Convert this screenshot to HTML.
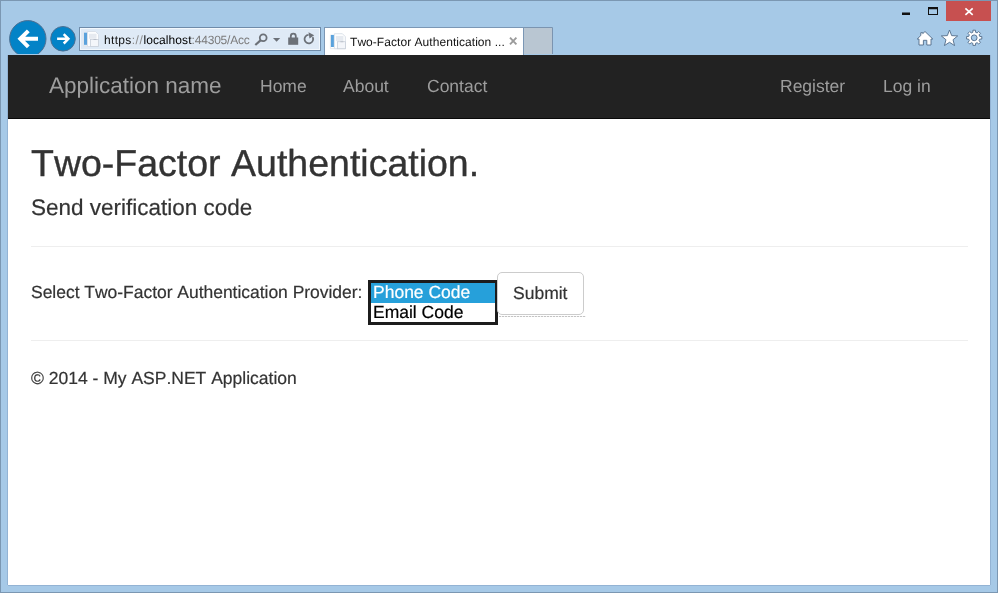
<!DOCTYPE html>
<html><head><meta charset="utf-8"><title>Two-Factor Authentication</title>
<style>
*{box-sizing:border-box;margin:0;padding:0}
html,body{font-kerning:none;text-rendering:geometricPrecision;width:998px;height:593px;overflow:hidden;background:#a6c9e7;font-family:"Liberation Sans",Arial,sans-serif}
#win{position:absolute;left:0;top:0;width:998px;height:593px;background:#a6c9e7;box-shadow:inset 0 0 0 1px #7b97b2;}
.abs{position:absolute}
#page{box-shadow:-1px 0 0 #93b3d4,1px 0 0 #93b3d4,0 1px 0 #93b3d4;position:absolute;left:8px;top:55px;width:982px;height:530px;background:#fff;overflow:hidden}
#nav{position:absolute;left:0;top:0;width:982px;height:64px;background:#222;border-bottom:1px solid #090909}
#nav span{will-change:transform;position:absolute;color:#9d9d9d;white-space:nowrap;line-height:1}
.brand{font-size:22.5px;left:41px;top:20px}
.lnk{font-size:17.5px;top:23px}
.txt{will-change:transform;-webkit-text-stroke:0.2px;position:absolute;white-space:nowrap;line-height:1;color:#333}
.hr{position:absolute;left:23px;width:937px;height:1px;background:#eee}
.chrome{letter-spacing:0.05px;will-change:transform;font-family:"Liberation Sans",sans-serif;font-size:12px;white-space:nowrap;line-height:1;position:absolute}
</style></head><body>
<div id="win">
<!-- chrome -->
<svg class="abs" style="left:0;top:0" width="998" height="56" viewBox="0 0 998 56">
<!-- window controls -->
<rect x="902" y="12.5" width="8" height="2.5" fill="#111"/>
<path d="M928 7 H938 V15 H928 Z M929 9.300 V14 H937 V9.300 Z" fill="#111" fill-rule="evenodd"/>
<rect x="946" y="1" width="45" height="20" fill="#c75050"/>
<path d="M965.400 8.300 L972.700 14.800 M972.700 8.300 L965.400 14.800" stroke="#fff" stroke-width="1.700" fill="none"/>
<!-- back / forward -->
<clipPath id="cb"><rect x="0" y="0" width="100" height="54"/></clipPath>
<g clip-path="url(#cb)">
<circle cx="27.800" cy="38.800" r="18.200" fill="#0383c7" stroke="#4c6f92" stroke-width="1"/>
<path d="M20.300 38.800 H38 M28.300 30.800 L20.300 38.800 L28.300 46.800" stroke="#fff" stroke-width="4" fill="none" stroke-linejoin="miter"/>
</g>
<circle cx="63" cy="38.800" r="12.300" fill="#0383c7" stroke="#4c6f92" stroke-width="1"/>
<path d="M57.100 38.800 H68.400 M63.700 34.100 L68.400 38.800 L63.700 43.500" stroke="#fff" stroke-width="2.500" fill="none"/>
<!-- address bar -->
<rect x="79.500" y="27.500" width="241" height="23" fill="#dfeaf6" stroke="#6f8ba9"/>
<rect x="80.500" y="28.500" width="239" height="21" fill="none" stroke="#f3f8fd"/>
<g id="pgicon">
<path d="M83.500 32.500 V46.500 H98" fill="none" stroke="#dfe4ea" stroke-width="0.800"/>
<path d="M87.500 31.500 H95.500 L98.500 34.500 V46.500 H87.500 Z" fill="#fcfdfe" stroke="#d3dbe5" stroke-width="0.800"/>
<rect x="84" y="32.700" width="3" height="12.100" fill="#5aa2dc"/>
<rect x="89" y="33.800" width="7.500" height="5" fill="#e6eaf0"/>
<rect x="90.500" y="39.500" width="8" height="7" fill="#f4f6fa" stroke="#c9d0da" stroke-width="0.800"/>
<rect x="93.500" y="39.200" width="3" height="0.800" fill="#b3b9c2"/>
</g>
<g fill="none" stroke="#6c7178">
<circle cx="263.200" cy="37.700" r="3.400" stroke-width="1.800"/><path d="M260.800 40.200 L255.300 45" stroke-width="2.200"/>
<path d="M312.700 37.200 A4.300 4.300 0 1 1 308.600 34.800" stroke-width="1.800"/>
<path d="M290.800 38 V36.200 a2.500 2.500 0 0 1 5 0 V38" stroke-width="1.800"/>
</g>
<g fill="#6c7178">
<path d="M273 38 H280.200 L276.600 41.700 Z"/>
<rect x="288.200" y="37.500" width="10" height="7.300"/>
<path d="M308.500 32.300 L314.200 35.200 L309.500 38.400 Z"/>
</g>
<!-- tab -->
<rect x="324.500" y="27.500" width="199" height="30" fill="#fff" stroke="#7b97b5"/>
<use href="#pgicon" x="246.900" y="2.200"/>
<path d="M510 37.700 L516.400 44.300 M516.400 37.700 L510 44.300" stroke="#9b9b9b" stroke-width="1.900" fill="none"/>
<rect x="524" y="28" width="28" height="26" fill="#b9c6d2"/><path d="M524 27.500 H552.500 V54" fill="none" stroke="#7b94b0"/>
<!-- right icons -->
<g fill="#fff" stroke="#506b88" stroke-width="0.900" stroke-linejoin="round">
<path d="M925 31.500 L932.800 39 H931 V45 H926.800 V40.300 H923.400 V45 H919 V39 H917.200 L920.800 35.500 V32.700 H922.800 V33.600 Z"/>
<path d="M949.50 30.00 L951.67 35.61 L957.68 35.94 L953.02 39.74 L954.55 45.56 L949.50 42.30 L944.45 45.56 L945.98 39.74 L941.32 35.94 L947.33 35.61 Z"/>
<path fill-rule="evenodd" d="M972.83 32.27 L972.94 30.20 L975.46 30.20 L975.57 32.27 L977.14 32.92 L978.68 31.54 L980.46 33.32 L979.08 34.86 L979.73 36.43 L981.80 36.54 L981.80 39.06 L979.73 39.17 L979.08 40.74 L980.46 42.28 L978.68 44.06 L977.14 42.68 L975.57 43.33 L975.46 45.40 L972.94 45.40 L972.83 43.33 L971.26 42.68 L969.72 44.06 L967.94 42.28 L969.32 40.74 L968.67 39.17 L966.60 39.06 L966.60 36.54 L968.67 36.43 L969.32 34.86 L967.94 33.32 L969.72 31.54 L971.26 32.92 Z M971.30 37.80 a2.9 2.9 0 1 0 5.8 0 a2.9 2.9 0 1 0 -5.8 0 Z"/>
</g>
</svg>
<div class="chrome" id="addr" style="left:104px;top:34px;letter-spacing:0"><span id="a1" style="color:#111;letter-spacing:.33px">https</span><span id="a2" style="color:#8a8a8a;letter-spacing:.6px">://</span><span id="a3" style="color:#000;letter-spacing:.08px">localhost</span><span id="a4" style="color:#7b7b7b;letter-spacing:-.2px">:44305/Acc</span></div>
<div class="chrome" id="tabtitle" style="left:350px;top:36px;color:#111">Two-Factor Authentication ...</div>
<!-- page -->
<div id="page">
<div id="nav">
<span class="brand">Application name</span>
<span class="lnk" style="left:252px">Home</span>
<span class="lnk" style="left:335px">About</span>
<span class="lnk" style="left:419px">Contact</span>
<span class="lnk" style="left:772px">Register</span>
<span class="lnk" style="left:875px">Log in</span>
</div>
<div class="txt" id="h2" style="left:23px;top:90px;font-size:37.5px;-webkit-text-stroke:0.35px #333">Two-Factor Authentication.</div>
<div class="txt" id="h4" style="left:23px;top:142px;font-size:22.5px">Send verification code</div>
<div class="hr" style="top:191px"></div>
<div class="txt" id="lbl" style="left:23px;top:229px;font-size:17.5px;letter-spacing:-0.03px">Select Two-Factor Authentication Provider:</div>
<div class="abs" id="sel" style="left:360px;top:225px;width:130px;height:45px;border:3px solid #1c1c1c;background:#fff"></div>
<div class="abs" style="left:363px;top:228px;width:124px;height:20px;background:#26a0da"></div>
<div class="txt" id="o1" style="left:365px;top:229px;font-size:17.5px;color:#fff">Phone Code</div>
<div class="txt" id="o2" style="left:365px;top:249px;font-size:17.5px;color:#000">Email Code</div>
<div class="abs" id="btn" style="left:489px;top:217px;width:87px;height:43px;border:1px solid #ccc;border-radius:5px;background:#fff"></div>
<div class="txt" id="bt" style="left:505px;top:230px;font-size:17.5px;color:#333">Submit</div>
<div class="abs" style="left:491px;top:261px;width:87px;height:1px;background:repeating-linear-gradient(90deg,#c4c4c4 0,#c4c4c4 2px,#f2f2f2 2px,#f2f2f2 3px)"></div>
<div class="hr" style="top:285px"></div>
<div class="txt" id="ft" style="left:23px;top:315px;font-size:17.5px">© 2014 - My ASP.NET Application</div>
</div>
</div>
</body></html>
